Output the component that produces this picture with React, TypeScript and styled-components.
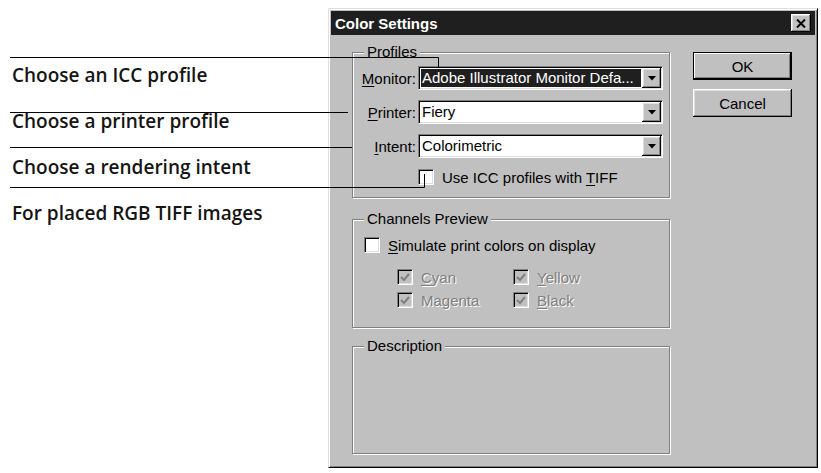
import styled, { createGlobalStyle } from 'styled-components';

const GlobalStyle = createGlobalStyle`
  html, body {
    margin: 0;
    padding: 0;
    background: #fff;
  }
  body {
    width: 821px;
    height: 473px;
    overflow: hidden;
    font-family: 'Liberation Sans', Arial, sans-serif;
  }
`;

const Page = styled.div`
  position: relative;
  display: flex;
  width: 821px;
  height: 473px;
`;

const Callouts = styled.ul`
  list-style: none;
  margin: 0;
  padding: 52px 0 0 12px;
  width: 316px;
  font-family: 'Open Sans', 'Liberation Sans', sans-serif;
  font-weight: 600;
  font-size: 19px;
  color: #151515;
`;

const Callout = styled.li`
  height: 46px;
  display: flex;
  align-items: center;
  white-space: nowrap;
`;

const Leaders = styled.svg`
  position: absolute;
  left: 0;
  top: 0;
  pointer-events: none;
`;

const Dialog = styled.div`
  margin-top: 8px;
  width: 490px;
  height: 460px;
  box-sizing: border-box;
  padding: 2px;
  background: #c0c0c0;
  border: 1px solid;
  border-color: #dfdfdf #000 #000 #dfdfdf;
  box-shadow: inset 1px 1px 0 #fff, inset -1px -1px 0 #808080;
  display: flex;
  flex-direction: column;
  font-size: 15px;
  color: #000;
`;

const TitleBar = styled.div`
  height: 24px;
  flex: none;
  display: flex;
  align-items: center;
  justify-content: space-between;
  padding: 0 4px 0 4px;
  background: #1f1f1f;
  color: #fff;
  font-weight: bold;
  font-size: 15px;
`;

const Bevel = `
  background: #c0c0c0;
  border: none;
  box-shadow: inset -1px -1px 0 #000, inset 1px 1px 0 #fff,
    inset -2px -2px 0 #808080, inset 2px 2px 0 #dfdfdf;
`;

const CloseButton = styled.span`
  ${Bevel}
  width: 20px;
  height: 18px;
  display: flex;
  align-items: center;
  justify-content: center;
`;

const Body = styled.div`
  display: grid;
  grid-template-columns: 318px 99px;
  column-gap: 23px;
  align-items: start;
  padding: 17px 0 0 21px;
`;

const Column = styled.div`
  display: flex;
  flex-direction: column;
`;

const Group = styled.section<{ $top?: number; $height?: number }>`
  margin-top: ${(p) => p.$top ?? 0}px;
  height: ${(p) => (p.$height ? `${p.$height}px` : 'auto')};
  box-sizing: border-box;
  border: 1px solid #808080;
  box-shadow: 1px 1px 0 #fff, inset 1px 1px 0 #fff;
`;

const GroupTitle = styled.div`
  width: max-content;
  margin: -9px 0 0 11px;
  padding: 0 3px;
  line-height: 16px;
  background: #c0c0c0;
`;

const ProfileGrid = styled.div`
  display: grid;
  grid-template-columns: 63px 245px;
  grid-template-rows: 24px 24px 24px 18px;
  column-gap: 2px;
  row-gap: 10px;
  margin-top: 6px;
  padding-bottom: 11px;
`;

const FieldLabel = styled.label`
  display: flex;
  align-items: center;
  justify-content: flex-end;
  white-space: nowrap;
`;

const Combo = styled.div`
  display: flex;
  height: 24px;
  box-sizing: border-box;
  background: #fff;
  border: 1px solid;
  border-color: #808080 #fff #fff #808080;
  box-shadow: inset 1px 1px 0 #000, inset -1px -1px 0 #dfdfdf;
  padding: 1px;
`;

const ComboText = styled.span<{ $selected?: boolean }>`
  flex: 1;
  margin: 1px 1px 1px 1px;
  padding-left: 1px;
  line-height: 18px;
  white-space: nowrap;
  overflow: hidden;
  background: ${(p) => (p.$selected ? '#1f1f1f' : 'transparent')};
  color: ${(p) => (p.$selected ? '#fff' : '#000')};
`;

const ComboArrow = styled.span`
  ${Bevel}
  width: 19px;
  flex: none;
  display: flex;
  align-items: center;
  justify-content: center;
`;

const CheckRow = styled.label<{ $disabled?: boolean }>`
  display: flex;
  align-items: center;
  gap: 8px;
  height: 18px;
  white-space: nowrap;
  color: ${(p) => (p.$disabled ? '#808080' : '#000')};
  text-shadow: ${(p) => (p.$disabled ? '1px 1px 0 #fff' : 'none')};
`;

const CheckBox = styled.span<{ $disabled?: boolean }>`
  width: 16px;
  height: 16px;
  flex: none;
  box-sizing: border-box;
  background: ${(p) => (p.$disabled ? '#c0c0c0' : '#fff')};
  border: 1px solid;
  border-color: #808080 #fff #fff #808080;
  box-shadow: inset 1px 1px 0 #000, inset -1px -1px 0 #dfdfdf;
  display: flex;
  align-items: center;
  justify-content: center;
`;

const ChannelBody = styled.div`
  padding: 9px 0 18px 11px;
`;

const InkGrid = styled.div`
  display: grid;
  grid-template-columns: 116px auto;
  grid-auto-rows: 18px;
  row-gap: 5px;
  margin: 14px 0 0 33px;
`;

const Buttons = styled.div`
  display: flex;
  flex-direction: column;
  gap: 9px;
`;

const Button = styled.button<{ $default?: boolean }>`
  width: 99px;
  height: 28px;
  padding: 0;
  background: #c0c0c0;
  border: none;
  font: 15px 'Liberation Sans', Arial, sans-serif;
  color: #000;
  box-shadow: ${(p) =>
    p.$default
      ? 'inset 0 0 0 1px #000, inset -2px -2px 0 #000, inset 2px 2px 0 #fff, inset -3px -3px 0 #808080'
      : 'inset -1px -1px 0 #000, inset 1px 1px 0 #fff, inset -2px -2px 0 #808080, inset 2px 2px 0 #dfdfdf'};
`;

const U = styled.span`
  text-decoration: underline;
  text-underline-offset: 2px;
`;

const Arrow = () => (
  <svg width="8" height="5" viewBox="0 0 8 5">
    <path d="M0 0h8L4 4.5z" fill="#000" />
  </svg>
);

const Tick = () => (
  <svg width="10" height="9" viewBox="0 0 10 9">
    <path d="M1 4l3 3 5-6" fill="none" stroke="#808080" strokeWidth="2" />
  </svg>
);

const callouts = [
  'Choose an ICC profile',
  'Choose a printer profile',
  'Choose a rendering intent',
  'For placed RGB TIFF images',
];

export default function App() {
  return (
    <Page>
      <GlobalStyle />
      <Callouts>
        {callouts.map((c) => (
          <Callout key={c}>{c}</Callout>
        ))}
      </Callouts>

      <Dialog>
        <TitleBar>
          Color Settings
          <CloseButton>
            <svg width="10" height="9" viewBox="0 0 10 9">
              <path d="M1 0.5l8 8M9 0.5l-8 8" stroke="#000" strokeWidth="2" />
            </svg>
          </CloseButton>
        </TitleBar>

        <Body>
          <Column>
            <Group>
              <GroupTitle>Profiles</GroupTitle>
              <ProfileGrid>
                <FieldLabel>
                  <span><U>M</U>onitor:</span>
                </FieldLabel>
                <Combo>
                  <ComboText $selected>Adobe Illustrator Monitor Defa...</ComboText>
                  <ComboArrow><Arrow /></ComboArrow>
                </Combo>
                <FieldLabel>
                  <span><U>P</U>rinter:</span>
                </FieldLabel>
                <Combo>
                  <ComboText>Fiery</ComboText>
                  <ComboArrow><Arrow /></ComboArrow>
                </Combo>
                <FieldLabel>
                  <span><U>I</U>ntent:</span>
                </FieldLabel>
                <Combo>
                  <ComboText>Colorimetric</ComboText>
                  <ComboArrow><Arrow /></ComboArrow>
                </Combo>
                <span />
                <CheckRow>
                  <CheckBox />
                  <span>Use ICC profiles with <U>T</U>IFF</span>
                </CheckRow>
              </ProfileGrid>
            </Group>

            <Group $top={21}>
              <GroupTitle>Channels Preview</GroupTitle>
              <ChannelBody>
                <CheckRow>
                  <CheckBox />
                  <span><U>S</U>imulate print colors on display</span>
                </CheckRow>
                <InkGrid>
                  <CheckRow $disabled>
                    <CheckBox $disabled><Tick /></CheckBox>
                    <span><U>C</U>yan</span>
                  </CheckRow>
                  <CheckRow $disabled>
                    <CheckBox $disabled><Tick /></CheckBox>
                    <span><U>Y</U>ellow</span>
                  </CheckRow>
                  <CheckRow $disabled>
                    <CheckBox $disabled><Tick /></CheckBox>
                    <span>Ma<U>g</U>enta</span>
                  </CheckRow>
                  <CheckRow $disabled>
                    <CheckBox $disabled><Tick /></CheckBox>
                    <span><U>B</U>lack</span>
                  </CheckRow>
                </InkGrid>
              </ChannelBody>
            </Group>

            <Group $top={18} $height={108}>
              <GroupTitle>Description</GroupTitle>
            </Group>
          </Column>

          <Buttons>
            <Button $default>OK</Button>
            <Button>Cancel</Button>
          </Buttons>
        </Body>
      </Dialog>

      <Leaders width="821" height="473" viewBox="0 0 821 473">
        <path
          d="M10 57.5H438.5V68M10 112.5H348M10 147.5H352M10 187.5H424.5V174"
          fill="none"
          stroke="#000"
          strokeWidth="1"
        />
      </Leaders>
    </Page>
  );
}
